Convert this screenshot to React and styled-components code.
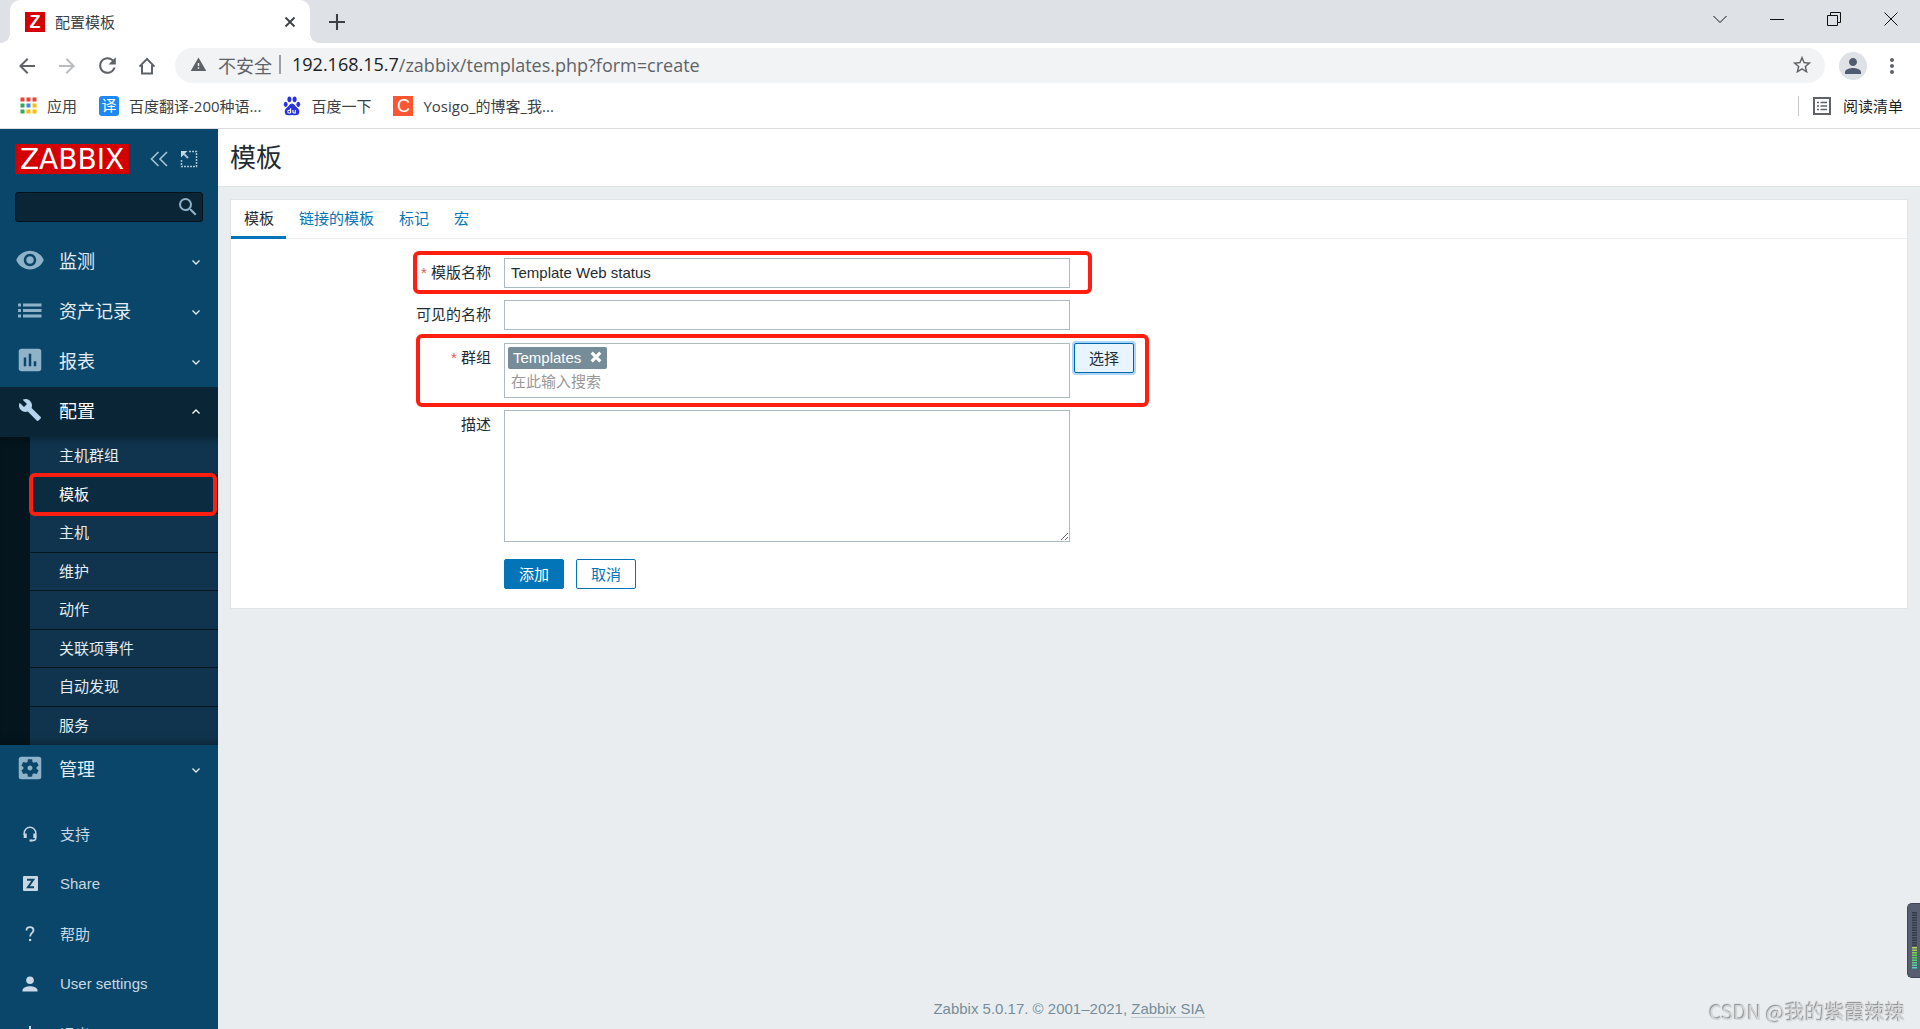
import React from "react";
import styled, { createGlobalStyle, css } from "styled-components";
import {
  MdArrowBack,
  MdArrowForward,
  MdAssessment,
  MdBuild,
  MdMoreVert,
  MdPerson,
  MdRefresh,
  MdSearch,
  MdSettingsApplications,
  MdStarBorder,
  MdVisibility,
  MdWarning,
} from "react-icons/md";

const uiFont = `"Liberation Sans", "Noto Sans CJK SC", sans-serif`;
const chromeFont = `"Open Sans", "Noto Sans CJK SC", sans-serif`;

const GlobalStyle = createGlobalStyle`
  *, *::before, *::after { box-sizing: border-box; }
  body { margin: 0; font-family: ${uiFont}; font-size: 15px; color: #1f2c33; }
  button, input, textarea { font: inherit; color: inherit; }
  a { color: inherit; text-decoration: none; }
  ul { margin: 0; padding: 0; list-style: none; }
  svg { display: block; flex: none; }
`;

const Shell = styled.div`
  display: flex;
  flex-direction: column;
  height: 100vh;
  overflow: hidden;
`;

/* ---------- browser frame ---------- */

const Chrome = styled.header`
  flex: none;
  background: #fff;
  border-bottom: 1px solid #dadce0;
  font-family: ${chromeFont};
`;

const IconButton = styled.button`
  display: flex;
  align-items: center;
  justify-content: center;
  flex: none;
  width: ${(p) => p.$w || 40}px;
  height: 28px;
  padding: 0;
  border: 0;
  background: none;
  color: ${(p) => p.$color || "#5f6368"};
`;

const TabStrip = styled.div`
  display: flex;
  height: 43px;
  background: #dee1e6;
`;

const BrowserTab = styled.div`
  position: relative;
  display: flex;
  align-items: center;
  gap: 10px;
  width: 300px;
  margin-left: 10px;
  padding: 0 6px 0 15px;
  border-radius: 10px 10px 0 0;
  background: #fff;
  color: #3c4043;
  &::before,
  &::after {
    content: "";
    position: absolute;
    bottom: 0;
    width: 10px;
    height: 10px;
  }
  &::before {
    left: -10px;
    background: radial-gradient(circle at 0 0, transparent 10px, #fff 10px);
  }
  &::after {
    right: -10px;
    background: radial-gradient(circle at 100% 0, transparent 10px, #fff 10px);
  }
`;

const TabTitle = styled.span`
  flex: 1;
`;

const SiteBadge = styled.span`
  display: flex;
  align-items: center;
  justify-content: center;
  flex: none;
  width: 20px;
  height: 20px;
  border-radius: ${(p) => p.$radius || 0}px;
  background: ${(p) => p.$bg};
  color: #fff;
  font-family: ${uiFont};
  font-size: ${(p) => p.$size || 18}px;
  font-weight: ${(p) => p.$weight || 700};
  line-height: 20px;
`;

const NewTab = styled.div`
  display: flex;
  flex: 1;
  align-items: center;
  padding-left: 13px;
`;

const WindowButtons = styled.div`
  display: flex;
  align-items: center;
  height: 38px;
`;

const Toolbar = styled.div`
  display: flex;
  align-items: center;
  height: 45px;
  padding: 0 14px 0 7px;
`;

const AddressBar = styled.div`
  display: flex;
  flex: 1;
  align-items: center;
  height: 35px;
  margin-left: 8px;
  padding: 0 9px 2px 15px;
  border-radius: 18px;
  background: #f1f3f4;
  color: #5f6368;
  font-size: 18px;
`;

const Insecure = styled.span`
  padding: 0 7px 0 11px;
`;

const Host = styled.label`
  padding-left: 11px;
  border-left: 2px solid #9aa0a6;
  color: #202124;
  line-height: 19px;
`;

const UrlInput = styled.input`
  flex: 1;
  min-width: 0;
  padding: 0;
  border: 0;
  outline: 0;
  background: none;
`;

const Avatar = styled.button`
  display: flex;
  align-items: center;
  justify-content: center;
  width: 28px;
  height: 28px;
  margin: 0 11px 0 14px;
  padding: 0;
  border: 0;
  border-radius: 50%;
  background: #dee1e6;
  color: #4f5b6e;
`;

const Bookmarks = styled.nav`
  display: flex;
  align-items: center;
  gap: 22px;
  height: 40px;
  padding: 0 17px 5px 20px;
  color: #3c4043;
`;

const Bookmark = styled.a`
  display: flex;
  align-items: center;
  gap: 10px;
`;

const ReadingList = styled.button`
  display: flex;
  align-items: center;
  gap: 12px;
  margin-left: auto;
  height: 20px;
  padding: 0 0 0 14px;
  border: 0;
  border-left: 1px solid #c8cacd;
  background: none;
  color: #202124;
`;

/* ---------- application ---------- */

const Body = styled.div`
  display: flex;
  flex: 1;
  min-height: 0;
`;

const Sidebar = styled.aside`
  flex: none;
  width: 218px;
  overflow: hidden;
  background: #0a466a;
  color: #e3edf3;
`;

const SideHead = styled.div`
  display: flex;
  align-items: center;
  padding: 15px 17px 0 15px;
`;

const Logo = styled.a`
  display: block;
  width: 114px;
  height: 30px;
  margin-right: auto;
  background: #d40000;
  color: #fff;
  font-family: "DejaVu Sans", sans-serif;
  font-size: 28px;
  line-height: 32px;
  text-align: center;
`;

const SearchBox = styled.form`
  display: flex;
  align-items: center;
  height: 30px;
  margin: 18px 15px 15px;
  border: 1px solid #03121b;
  border-radius: 3px;
  background: #0a2636;
`;

const SearchInput = styled.input`
  flex: 1;
  min-width: 0;
  padding: 0 8px;
  border: 0;
  outline: 0;
  background: none;
`;

const MenuLink = styled.a`
  display: flex;
  align-items: center;
  height: 50px;
  padding: 0 15px 4px;
  background: ${(p) => (p.$active ? "#0a2636" : "transparent")};
  color: ${(p) => (p.$active ? "#fff" : "#e3edf3")};
  font-size: 18px;
`;

const MenuIcon = styled.span`
  display: flex;
  justify-content: center;
  width: 30px;
  color: ${(p) => (p.$active ? "#b6d5ec" : "#8fb2c9")};
`;

const MenuText = styled.span`
  flex: 1;
  padding-left: 14px;
`;

const MenuArrow = styled.span`
  padding-top: 4px;
`;

const SubMenu = styled.ul`
  position: relative;
  display: grid;
  grid-auto-rows: 1fr;
  height: 308px;
  padding-left: 30px;
  background: #04151e;
  &::after {
    content: "";
    position: absolute;
    inset: 0;
    pointer-events: none;
    box-shadow: inset 0 10px 10px -10px rgba(0, 0, 0, 0.5),
      inset 0 -10px 10px -10px rgba(0, 0, 0, 0.5);
  }
`;

const SubItem = styled.li`
  position: relative;
  border-bottom: 1px solid #04151e;
  &:last-child {
    border-bottom: 0;
  }
`;

const SubLink = styled.a`
  display: flex;
  align-items: center;
  height: 100%;
  padding: 0 0 2px 29px;
  background: ${(p) => (p.$active ? "#0b2b40" : "#10344d")};
  color: ${(p) => (p.$active ? "#fff" : "#e3edf3")};
`;

/* Red marker outline laid over the part that it points out. */
const Marker = styled.span`
  position: absolute;
  z-index: 1;
  inset: ${(p) => p.$inset};
  width: ${(p) => (p.$width ? `${p.$width}px` : "auto")};
  border: 4px solid #ff1e10;
  border-radius: 6px;
  pointer-events: none;
`;

const UserMenu = styled.ul`
  padding-top: 15px;
`;

const UserLink = styled.a`
  display: flex;
  align-items: center;
  height: 50px;
  padding: 0 0 3px 15px;
  color: #c9d8e2;
`;

const UserIcon = styled.span`
  display: flex;
  justify-content: center;
  width: 30px;
  margin-right: 15px;
`;

const Main = styled.main`
  display: flex;
  flex: 1;
  flex-direction: column;
  min-width: 0;
  background: #e9edf0;
`;

const PageHead = styled.div`
  padding: 2px 12px 0;
  border-bottom: 1px solid #dfe4e7;
  background: #fff;
`;

const PageTitle = styled.h1`
  margin: 0;
  font-size: 26px;
  font-weight: 400;
  line-height: 55px;
`;

const Panel = styled.section`
  margin: 12px;
  border: 1px solid #dfe4e7;
  background: #fff;
`;

const Tabs = styled.div`
  display: flex;
  border-bottom: 1px solid #ebeef0;
`;

const Tab = styled.button`
  height: 39px;
  margin-bottom: -1px;
  padding: 0 12px 4px 13px;
  border: 0;
  background: none;
  color: #0275b8;
  ${(p) =>
    p.$active &&
    css`
      box-shadow: inset 0 -3px #0275b8;
      color: #1f2c33;
    `}
`;

const Form = styled.form`
  display: grid;
  gap: 12px;
  padding: 19px 0;
`;

const Row = styled.div`
  position: relative;
  display: grid;
  grid-template-columns: 273px minmax(0, 566px) auto;
  justify-content: start;
  margin-top: ${(p) => p.$top || 0}px;
`;

const Label = styled.label`
  padding-right: 13px;
  line-height: 30px;
  text-align: right;
  &::before {
    content: ${(p) => (p.$required ? '"* "' : "none")};
    color: #e45959;
  }
`;

const controlBox = css`
  display: block;
  width: 100%;
  border: 1px solid #acbbc2;
  border-radius: 0;
  background: #fff;
  outline: 0;
`;

const TextInput = styled.input`
  ${controlBox}
  height: 30px;
  padding: 0 6px 2px;
`;

const TextArea = styled.textarea`
  ${controlBox}
  height: 132px;
  padding: 6px;
  resize: vertical;
`;

const MultiSelect = styled.div`
  ${controlBox}
  height: 55px;
  padding: 3px;
`;

const ChipRow = styled.div`
  display: flex;
`;

const Chip = styled.span`
  display: inline-flex;
  align-items: center;
  gap: 9px;
  height: 22px;
  padding: 0 5px 2px;
  border-radius: 2px;
  background: #768d99;
  color: #fff;
`;

const ChipRemove = styled.button`
  display: block;
  padding: 0;
  border: 0;
  background: none;
`;

const GroupInput = styled.input`
  display: block;
  width: 100%;
  height: 25px;
  padding: 0 3px;
  border: 0;
  outline: 0;
  background: none;
  &::placeholder {
    color: #999;
    opacity: 1;
  }
`;

const Button = styled.button`
  width: 60px;
  height: 30px;
  padding: 0 0 2px;
  border: 1px solid #0275b8;
  border-radius: 2px;
  background: ${(p) => (p.$primary ? "#0275b8" : "#fff")};
  color: ${(p) => (p.$primary ? "#fff" : "#0275b8")};
  ${(p) =>
    p.$focused &&
    css`
      margin-left: 4px;
      border-color: #0068a6;
      background: #e8f4ff;
      color: #1f2c33;
      box-shadow: 0 0 0 2px rgba(51, 153, 255, 0.4);
    `}
`;

const Actions = styled.div`
  display: flex;
  gap: 12px;
  grid-column: 2;
`;

const Footer = styled.footer`
  margin-top: auto;
  padding-bottom: 11px;
  color: #768d99;
  line-height: 18px;
  text-align: center;
`;

const FooterLink = styled.a`
  display: inline-block;
  border-bottom: 1px solid #c0cad0;
  line-height: 17px;
`;

const Meter = styled.div`
  position: fixed;
  right: 0;
  bottom: 51px;
  padding: 8px 3px 8px 4px;
  border: 1px solid #404654;
  border-right: 0;
  border-radius: 5px 0 0 5px;
  background: #565e70;
`;

const Watermark = styled.div`
  position: fixed;
  right: 15px;
  bottom: 2px;
  color: #d4d6d8;
  font-family: "Noto Sans CJK SC", sans-serif;
  font-size: 20px;
  line-height: 30px;
  text-shadow: -1px -1px 1px #888;
`;

/* ---------- drawings ---------- */

const PawIcon = () => (
  <svg width="18" height="20" viewBox="0 0 18 20" fill="#2932e1">
    <ellipse cx="6.4" cy="3.3" rx="2" ry="2.9" />
    <ellipse cx="11.6" cy="3.3" rx="2" ry="2.9" />
    <ellipse cx="2.7" cy="8.3" rx="1.9" ry="2.6" />
    <ellipse cx="15.3" cy="8.3" rx="1.9" ry="2.6" />
    <path d="M9 7.4c-2.4 0-2.8 2.3-4.4 3.6C3 12.3 1.7 13.5 1.7 15.7c0 2.3 1.5 3.6 3.5 3.6 1.4 0 2.4-.3 3.8-.3s2.4.3 3.8.3c2 0 3.5-1.3 3.5-3.6 0-2.2-1.3-3.4-2.9-4.7C11.8 9.7 11.4 7.4 9 7.4z" />
    <path
      d="M7.6 12.3v4.8M7.6 17H6.1a1.3 1.3 0 0 1 0-2.8h1.5M9.9 14v2.1c0 .6.4.9 1 .9h1.4v-3"
      fill="none"
      stroke="#fff"
      strokeWidth="1.1"
    />
  </svg>
);

const AppsIcon = () => (
  <svg width="17" height="17" viewBox="0 0 17 17">
    {[
      ["#ea4335", "#ea4335", "#ea4335"],
      ["#34a853", "#4285f4", "#fbbc04"],
      ["#34a853", "#fbbc04", "#fbbc04"],
    ].map((row, y) =>
      row.map((c, x) => (
        <rect key={`${x}${y}`} x={x * 6 + 0.5} y={y * 6 + 0.5} width="4" height="4" fill={c} />
      ))
    )}
  </svg>
);

const HomeIcon = () => (
  <svg width="18" height="18" viewBox="0 0 18 18" fill="none" stroke="currentColor" strokeWidth="2">
    <path d="M1.5 9.6 9 2l7.5 7.6M4 8v8.5h10V8" />
  </svg>
);

const ReadingIcon = () => (
  <svg width="18" height="18" viewBox="0 0 18 18" stroke="#5f6368" fill="none" strokeWidth="2">
    <path d="M1 1h16v16H1z" />
    <path d="M4 5.5h2M4 9h2M4 12.5h2M7.5 5.5H14M7.5 9H14M7.5 12.5H14" strokeWidth="1.5" />
  </svg>
);

const Glyph = ({ d, size = 14, width = 1 }) => (
  <svg width={size} height={size} viewBox="0 0 14 14" fill="none" stroke="currentColor" strokeWidth={width}>
    <path d={d} />
  </svg>
);

const CollapseIcon = () => (
  <svg width="18" height="16" viewBox="0 0 18 16" fill="none" stroke="currentColor" strokeWidth="1.6">
    <path d="M8.500 1 1.500 8l7 7M17 1l-7 7 7 7" />
  </svg>
);

const ListIcon = () => (
  <svg width="24" height="15" viewBox="0 0 24 15" fill="currentColor">
    {[0, 5.5, 11].map((y) => (
      <g key={y}>
        <rect x="0" y={y + 0.5} width="3" height="3" />
        <rect x="5" y={y + 0.5} width="18.5" height="3" />
      </g>
    ))}
  </svg>
);

const HeadsetIcon = () => (
  <svg width="14" height="16" viewBox="0 0 14 16" fill="none" stroke="currentColor">
    <path d="M1.2 9V7a5.800 5.800 0 0 1 11.600 0v5c0 1.800-1.200 2.500-2.800 2.500H7.500" strokeWidth="1.4" />
    <path d="M2.200 7.500v4.500M11.800 7.500V12" strokeWidth="3" />
    <path d="M6.500 14.500h3" strokeWidth="2" />
  </svg>
);

const ShareIcon = () => (
  <svg width="15" height="15" viewBox="0 0 15 15">
    <rect width="15" height="15" rx="1" fill="currentColor" />
    <path d="M4 3.800h6.200L5 11.200h6" fill="none" stroke="#0a466a" strokeWidth="2" />
  </svg>
);

const HelpIcon = () => (
  <svg width="12" height="16" viewBox="0 0 12 16" fill="none" stroke="currentColor">
    <path d="M2.500 4.500C2.500 2.200 4 1.200 6 1.200s3.500 1.100 3.500 3c0 2.600-3.400 3-3.400 6.300" strokeWidth="1.8" />
    <path d="M5 14h2.200" strokeWidth="2.2" />
  </svg>
);

const UserGlyph = () => (
  <svg width="16" height="16" viewBox="0 0 16 16" fill="currentColor">
    <circle cx="8" cy="4.3" r="3.8" />
    <path d="M.5 15.500v-1.200c0-2.600 4.500-4 7.500-4s7.500 1.400 7.500 4v1.200z" />
  </svg>
);

const PowerIcon = () => (
  <svg width="16" height="16" viewBox="0 0 16 16" fill="none" stroke="currentColor" strokeWidth="2">
    <path d="M8 0v8M4.300 3.500a6 6 0 1 0 7.400 0" />
  </svg>
);

const KioskIcon = () => (
  <svg width="18" height="18" viewBox="0 0 18 18" fill="none" stroke="#a9c3d4">
    <path d="M9 1.500h7.500v15H1.500V9" strokeWidth="1.5" strokeDasharray="2 1" />
    <path d="M8 8 2.500 2.500" strokeWidth="2" />
    <path d="M1 1h6.500L1 7.500z" fill="#c5d8e4" stroke="none" />
  </svg>
);

const LevelBars = () => (
  <svg width="5" height="57" viewBox="0 0 5 57">
    {Array.from({ length: 23 }, (_, i) => (
      <rect
        key={i}
        y={i * 2.5}
        width="5"
        height="1.5"
        fill={i < 14 ? "#353b49" : `hsl(${75 + (i - 14) * 12}, 60%, 58%)`}
      />
    ))}
  </svg>
);

const chevronDown = "M3.500 5.500 7 9l3.500-3.500";
const chevronUp = "M3.500 8.500 7 5l3.500 3.500";

const submenu = ["主机群组", "模板", "主机", "维护", "动作", "关联项事件", "自动发现", "服务"];

const userMenu = [
  ["支持", HeadsetIcon],
  ["Share", ShareIcon],
  ["帮助", HelpIcon],
  ["User settings", UserGlyph],
  ["退出", PowerIcon],
];

const MenuEntry = ({ icon, text, active }) => (
  <MenuLink href="#" $active={active}>
    <MenuIcon $active={active}>{icon}</MenuIcon>
    <MenuText>{text}</MenuText>
    <MenuArrow>
      <Glyph d={active ? chevronUp : chevronDown} width={1.3} />
    </MenuArrow>
  </MenuLink>
);

const BrowserFrame = () => (
  <Chrome>
    <TabStrip>
      <BrowserTab>
        <SiteBadge $bg="#d40000">Z</SiteBadge>
        <TabTitle>配置模板</TabTitle>
        <IconButton $w={28} $color="#3c4043" aria-label="关闭标签页">
          <Glyph d="M2.500 2.500l9 9M11.500 2.500l-9 9" width={1.8} />
        </IconButton>
      </BrowserTab>
      <NewTab>
        <IconButton $w={28} $color="#3c4043" aria-label="新标签页">
          <Glyph d="M7 0v14M0 7h14" size={16} width={1.8} />
        </IconButton>
      </NewTab>
      <WindowButtons>
        <IconButton $w={57} $color="#111" aria-label="搜索标签页">
          <Glyph d="M.5 4 7 10.500 13.500 4" />
        </IconButton>
        <IconButton $w={57} $color="#111" aria-label="最小化">
          <Glyph d="M0 7.500h14" />
        </IconButton>
        <IconButton $w={57} $color="#111" aria-label="还原">
          <Glyph d="M.5 3.500h10v10H.5zM3.500 3.500v-3h10v10h-3" />
        </IconButton>
        <IconButton $w={58} $color="#111" aria-label="关闭">
          <Glyph d="M.5.5l13 13M13.500.5l-13 13" />
        </IconButton>
      </WindowButtons>
    </TabStrip>
    <Toolbar>
      <IconButton aria-label="后退"><MdArrowBack size={24} /></IconButton>
      <IconButton aria-label="前进" $color="#babcbe"><MdArrowForward size={24} /></IconButton>
      <IconButton aria-label="刷新"><MdRefresh size={25} /></IconButton>
      <IconButton aria-label="主页"><HomeIcon /></IconButton>
      <AddressBar>
        <MdWarning size={17} />
        <Insecure>不安全</Insecure>
        <Host htmlFor="url">192.168.15.7</Host>
        <UrlInput id="url" defaultValue="/zabbix/templates.php?form=create" />
        <IconButton $w={28} aria-label="收藏"><MdStarBorder size={22} /></IconButton>
      </AddressBar>
      <Avatar aria-label="用户"><MdPerson size={24} /></Avatar>
      <IconButton $w={28} aria-label="菜单"><MdMoreVert size={24} /></IconButton>
    </Toolbar>
    <Bookmarks>
      <Bookmark href="#"><AppsIcon />应用</Bookmark>
      <Bookmark href="#">
        <SiteBadge $bg="#1e88f7" $radius={3} $size={15} $weight={400}>译</SiteBadge>
        百度翻译-200种语...
      </Bookmark>
      <Bookmark href="#"><PawIcon />百度一下</Bookmark>
      <Bookmark href="#">
        <SiteBadge $bg="#fc5531" $weight={400}>C</SiteBadge>
        Yosigo_的博客_我...
      </Bookmark>
      <ReadingList><ReadingIcon />阅读清单</ReadingList>
    </Bookmarks>
  </Chrome>
);

const AppSidebar = () => (
  <Sidebar>
    <SideHead>
      <Logo href="#">ZABBIX</Logo>
      <IconButton $w={36} $color="#a9c3d4" aria-label="收起侧栏"><CollapseIcon /></IconButton>
      <IconButton $w={24} aria-label="隐藏侧栏"><KioskIcon /></IconButton>
    </SideHead>
    <SearchBox>
      <SearchInput aria-label="搜索" />
      <IconButton $w={28} $color="#8fb2c9" type="button" aria-label="搜索">
        <MdSearch size={24} />
      </IconButton>
    </SearchBox>
    <nav>
      <MenuEntry text="监测" icon={<MdVisibility size={30} />} />
      <MenuEntry text="资产记录" icon={<ListIcon />} />
      <MenuEntry text="报表" icon={<MdAssessment size={30} />} />
      <MenuEntry text="配置" icon={<MdBuild size={24} />} active />
      <SubMenu>
        {submenu.map((text) => (
          <SubItem key={text}>
            <SubLink href="#" $active={text === "模板"}>{text}</SubLink>
            {text === "模板" && <Marker $inset="-3px 1px -3px -1px" />}
          </SubItem>
        ))}
      </SubMenu>
      <MenuEntry text="管理" icon={<MdSettingsApplications size={30} />} />
    </nav>
    <UserMenu>
      {userMenu.map(([text, Icon]) => (
        <li key={text}>
          <UserLink href="#">
            <UserIcon><Icon /></UserIcon>
            {text}
          </UserLink>
        </li>
      ))}
    </UserMenu>
  </Sidebar>
);

const TemplateForm = () => (
  <Form>
    <Row>
      <Label htmlFor="name" $required>模版名称</Label>
      <TextInput id="name" defaultValue="Template Web status" />
      <Marker $inset="-7px auto -6px 182px" $width={679} />
    </Row>
    <Row>
      <Label htmlFor="visible">可见的名称</Label>
      <TextInput id="visible" />
    </Row>
    <Row $top={1}>
      <Label htmlFor="groups" $required>群组</Label>
      <MultiSelect>
        <ChipRow>
          <Chip>
            Templates
            <ChipRemove type="button" aria-label="移除 Templates">
              <Glyph d="M2 2l10 10M12 2 2 12" size={12} width={3.6} />
            </ChipRemove>
          </Chip>
        </ChipRow>
        <GroupInput id="groups" placeholder="在此输入搜索" />
      </MultiSelect>
      <Button type="button" $focused>选择</Button>
      <Marker $inset="-9px auto -9px 185px" $width={733} />
    </Row>
    <Row>
      <Label htmlFor="description">描述</Label>
      <TextArea id="description" />
    </Row>
    <Row $top={5}>
      <Actions>
        <Button type="button" $primary>添加</Button>
        <Button type="button">取消</Button>
      </Actions>
    </Row>
  </Form>
);

export default function App() {
  return (
    <Shell>
      <GlobalStyle />
      <BrowserFrame />
      <Body>
        <AppSidebar />
        <Main>
          <PageHead><PageTitle>模板</PageTitle></PageHead>
          <Panel>
            <Tabs role="tablist">
              <Tab role="tab" aria-selected="true" $active>模板</Tab>
              <Tab role="tab">链接的模板</Tab>
              <Tab role="tab">标记</Tab>
              <Tab role="tab">宏</Tab>
            </Tabs>
            <TemplateForm />
          </Panel>
          <Footer>
            Zabbix 5.0.17. © 2001–2021, <FooterLink href="#">Zabbix SIA</FooterLink>
          </Footer>
        </Main>
      </Body>
      <Meter><LevelBars /></Meter>
      <Watermark>CSDN @我的紫霞辣辣</Watermark>
    </Shell>
  );
}
